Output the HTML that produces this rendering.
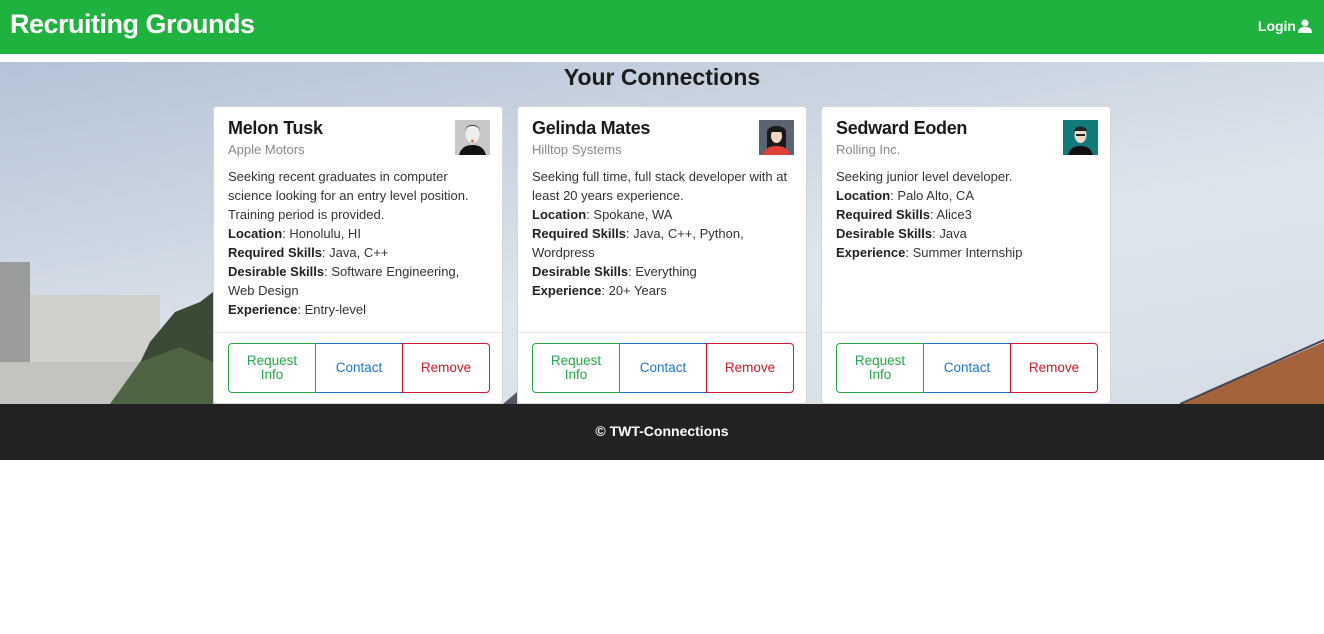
<!DOCTYPE html>
<html><head><meta charset="utf-8"><style>
*{box-sizing:border-box;margin:0;padding:0}
body{width:1324px;height:634px;background:#fff;font-family:"Liberation Sans",sans-serif;position:relative;overflow:hidden}
.hdr{position:absolute;left:0;top:0;width:1324px;height:54px;background:#1fb23f;color:#fff}
.hdr h1{position:absolute;left:10px;top:9px;font-size:27px;font-weight:bold;letter-spacing:-0.5px}
.login{position:absolute;right:12px;top:18px;font-size:14px;font-weight:bold;display:flex;align-items:center;gap:2px}
.bg{position:absolute;left:0;top:62px;width:1324px;height:342px;overflow:hidden;
background:linear-gradient(170deg,#b4c3d6 0%,#cdd7e3 35%,#dfe5ec 60%,#d6dde6 100%)}
.ttl{position:absolute;top:64px;width:1324px;text-align:center;font-size:23px;font-weight:bold;color:#1c1c1c}
.card{position:absolute;top:106px;width:290px;height:298px;background:#fff;border:1px solid #d6d6d6;border-radius:4px}
.card h2{position:absolute;left:14px;top:11px;font-size:18px;font-weight:bold;color:#1a1a1a;letter-spacing:-0.3px}
.co{position:absolute;left:14px;top:35px;font-size:13px;color:#888}
.av{position:absolute;left:241px;top:13px;width:35px;height:35px}
.txt{position:absolute;left:14px;top:60px;width:258px;font-size:13px;line-height:19px;color:#333}
.txt b{color:#222}
.div{position:absolute;left:0;top:225px;width:288px;border-top:1px solid #e5e5e5}
.btns{position:absolute;left:14px;top:236px;width:262px;height:50px;display:flex}
.btns div{flex:1;display:flex;align-items:center;justify-content:center;text-align:center;font-size:13.5px;line-height:14px;border:1px solid}
.g{color:#23a845;border-color:#23a845!important;border-radius:4px 0 0 4px}
.b{color:#1f74c9;border-color:#1f74c9!important;border-left:none!important;border-right:none!important}
.r{color:#d4182d;border-color:#d4182d!important;border-radius:0 4px 4px 0}
.ft{position:absolute;left:0;top:404px;width:1324px;height:56px;background:#222;color:#fff;font-size:14px;font-weight:bold;text-align:center;line-height:54px}
</style></head><body>
<div class="hdr"><h1>Recruiting Grounds</h1><div class="login">Login<svg width="14" height="14" viewBox="0 0 14 14"><circle cx="7" cy="4" r="3.5" fill="#fff"/><path d="M0 14c0-5 3-6 7-6s7 1 7 6z" fill="#fff"/></svg></div></div>
<div class="bg">
<svg width="1324" height="342" style="position:absolute;left:0;top:0">
<rect x="0" y="200" width="30" height="100" fill="#9a9d9c"/>
<rect x="30" y="233" width="130" height="110" fill="#cfd0cc"/>
<rect x="0" y="300" width="215" height="42" fill="#c3c4c0"/>
<path d="M120 342 L150 280 L175 250 L200 240 L213 230 L213 342Z" fill="#3b4a35"/>
<path d="M110 342 L140 300 L180 285 L213 300 L213 342Z" fill="#4f6443"/>
<path d="M1180 342 L1324 280 L1324 342Z" fill="#a4633a"/>
<path d="M1180 342 L1324 278" stroke="#445" stroke-width="2"/>
<path d="M503 342 L517 330 L517 342Z" fill="#556"/>
</svg>
</div>
<div class="ttl">Your Connections</div>

<div class="card" style="left:213px">
<h2>Melon Tusk</h2><div class="co">Apple Motors</div>
<svg class="av" viewBox="0 0 35 35"><rect width="35" height="35" fill="#c8c8c8"/><path d="M4 35c2-8 8-10 13.5-10S29 27 31 35z" fill="#111"/><ellipse cx="17.5" cy="14" rx="7" ry="9" fill="#eee"/><path d="M10 11c1-7 14-7 15 0 0-3-3-6-7.5-6S10 8 10 11z" fill="#111"/><circle cx="17.5" cy="21" r="1.5" fill="#e8702a"/></svg>
<div class="txt">Seeking recent graduates in computer science looking for an entry level position. Training period is provided.<br><b>Location</b>: Honolulu, HI<br><b>Required Skills</b>: Java, C++<br><b>Desirable Skills</b>: Software Engineering,<br>Web Design<br><b>Experience</b>: Entry-level</div>
<div class="div"></div>
<div class="btns"><div class="g">Request<br>Info</div><div class="b">Contact</div><div class="r">Remove</div></div>
</div>

<div class="card" style="left:517px">
<h2>Gelinda Mates</h2><div class="co">Hilltop Systems</div>
<svg class="av" viewBox="0 0 35 35"><rect width="35" height="35" fill="#5b6470"/><path d="M8 35V12c0-8 19-8 19 0v23z" fill="#1a1a1a"/><path d="M4 35c2-7 7-9 13.5-9S29 28 31 35z" fill="#e0403a"/><ellipse cx="17.5" cy="16" rx="5.5" ry="7" fill="#f1d6c8"/><path d="M11 12c1-6 12-6 13 0z" fill="#1a1a1a"/></svg>
<div class="txt" style="width:266px">Seeking full time, full stack developer with at least 20 years experience.<br><b>Location</b>: Spokane, WA<br><b>Required Skills</b>: Java, C++, Python, Wordpress<br><b>Desirable Skills</b>: Everything<br><b>Experience</b>: 20+ Years</div>
<div class="div"></div>
<div class="btns"><div class="g">Request<br>Info</div><div class="b">Contact</div><div class="r">Remove</div></div>
</div>

<div class="card" style="left:821px">
<h2>Sedward Eoden</h2><div class="co">Rolling Inc.</div>
<svg class="av" viewBox="0 0 35 35"><rect width="35" height="35" fill="#137a7a"/><path d="M5 35c2-7 7-9 12.5-9S28 28 30 35z" fill="#111"/><ellipse cx="17.5" cy="15" rx="6" ry="8" fill="#f0d9c8"/><path d="M11 11c1-6 12-6 13 0z" fill="#222"/><rect x="13" y="14" width="9" height="2" fill="#222"/></svg>
<div class="txt">Seeking junior level developer.<br><b>Location</b>: Palo Alto, CA<br><b>Required Skills</b>: Alice3<br><b>Desirable Skills</b>: Java<br><b>Experience</b>: Summer Internship</div>
<div class="div"></div>
<div class="btns"><div class="g">Request<br>Info</div><div class="b">Contact</div><div class="r">Remove</div></div>
</div>

<div class="ft">© TWT-Connections</div>
</body></html>
